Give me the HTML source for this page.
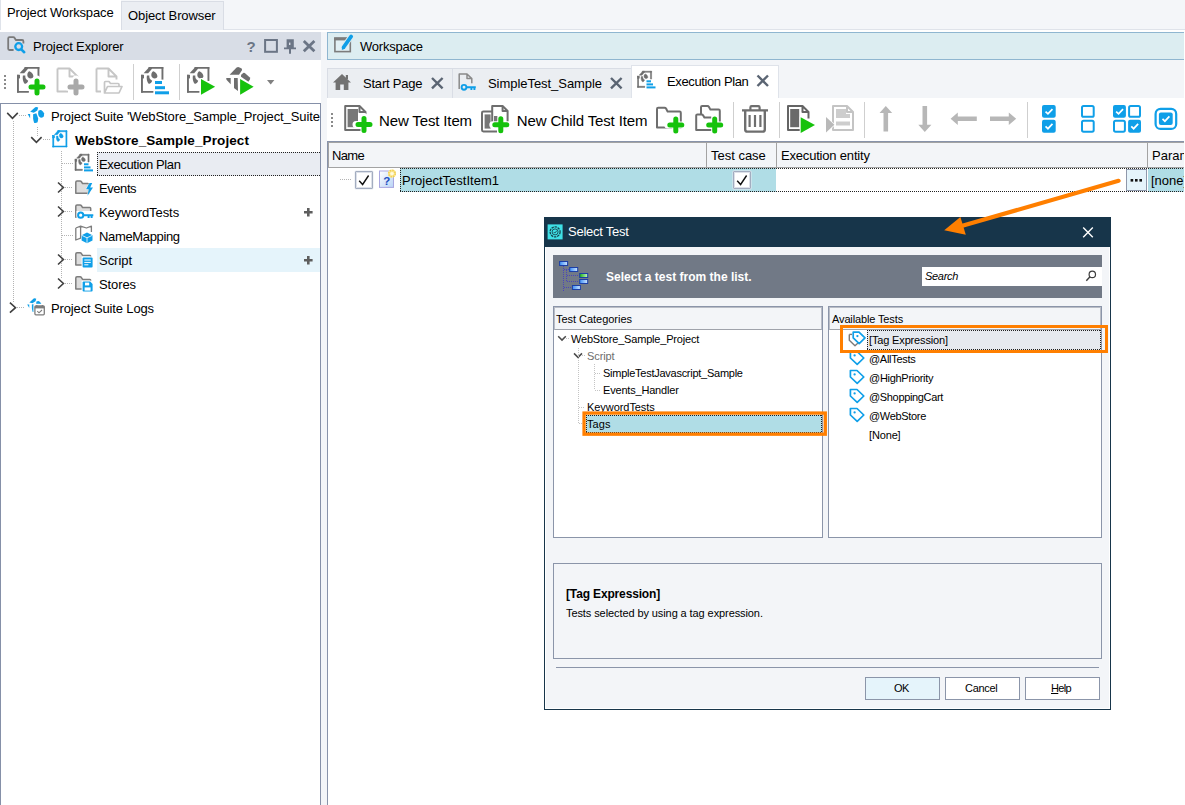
<!DOCTYPE html>
<html>
<head>
<meta charset="utf-8">
<title>Select Test</title>
<style>
*{box-sizing:border-box;margin:0;padding:0}
html,body{width:1185px;height:805px;overflow:hidden;background:#fff}
body{font-family:"Liberation Sans",sans-serif;font-size:13px;color:#000;position:relative}
.abs{position:absolute}
.t{position:absolute;white-space:nowrap;line-height:1}
svg{position:absolute;overflow:visible}
/* top band */
#topband{left:0;top:0;width:1185px;height:29px;background:#f4f6f9}
#topline{left:0;top:29px;width:1185px;height:1px;background:#dfe3ea}
#tab-pw{left:0;top:0;width:121px;height:30px;background:#fff;border-left:1px solid #dfe3ea}
#tab-ob{left:121px;top:1px;width:103px;height:29px;background:#ebeef3;border:1px solid #d9dde5;border-bottom:none}
/* left panel */
#pe-head{left:0;top:32px;width:321px;height:28px;background:#d8dde6}
#pe-tool{left:0;top:60px;width:321px;height:43px;background:#fff}
#tree{left:0;top:103px;width:321px;height:702px;background:#fff;border:1px solid #8590a8;border-bottom:none}
#split{left:321px;top:32px;width:6px;height:773px;background:#f3f5f8}
/* workspace */
#ws-head{left:327px;top:32px;width:870px;height:28px;background:#dcedf1;border:1px solid #8fb6d0}
#ws-tabs{left:327px;top:60px;width:858px;height:38px;background:#f3f5f8}
.itab{position:absolute;top:68px;height:30px;background:#ebeef2;border:1px solid #d9dde5;border-bottom:none}
#atab{left:631px;top:65px;width:148px;height:34px;background:#fff;border:1px solid #dfe3ea;border-bottom:none}
#ws-tool{left:327px;top:98px;width:858px;height:43px;background:#fff}
#grid{left:327px;top:141px;width:857px;height:664px;background:#fff;border-left:1px solid #8893aa;border-top:1px solid #8893aa}
#ghead{left:328px;top:142px;width:856px;height:26px;background:#f3f5f8;border:1px solid #a3a3a3;border-right:none}
.gsep{position:absolute;top:143px;width:1px;height:24px;background:#a3a3a3}
.sel{background:#b0dde6}
.dot-h{position:absolute;height:1px;background-image:repeating-linear-gradient(90deg,#222 0 1px,transparent 1px 2px)}
.dot-v{position:absolute;width:1px;background-image:repeating-linear-gradient(180deg,#222 0 1px,transparent 1px 2px)}
.tl-h{position:absolute;height:1px;background-image:repeating-linear-gradient(90deg,#b4b4b4 0 1px,transparent 1px 2px)}
.tl-v{position:absolute;width:1px;background-image:repeating-linear-gradient(180deg,#b4b4b4 0 1px,transparent 1px 2px)}
.cb{position:absolute;width:18px;height:18px;background:#fff;border:1px solid #a3adc0;border-radius:1px;box-shadow:inset 0 0 0 1px #dde1e9,0 0 0 0.5px #e6e9ef}
/* dialog */
#dlg{left:544px;top:217px;width:567px;height:493px;background:#f3f5f8;border:1px solid #17354a;box-shadow:inset 0 0 0 1px #fff}
#dlg-title{left:544px;top:217px;width:567px;height:30px;background:#17354a}
#banner{left:553px;top:255px;width:549px;height:43px;background:#717986}
#search{left:922px;top:267px;width:180px;height:19px;background:#fff}
.pnl{position:absolute;top:306px;height:232px;background:#fff;border:1px solid #8b95a9}
.pnl-h{position:absolute;top:307px;height:23px;background:#f3f5f8;border:1px solid #b9bdc6;border-bottom-color:#9fa3ab}
#desc{left:553px;top:563px;width:549px;height:96px;border:1px solid #8b95a9;background:#f3f5f8}
#dsep{left:556px;top:667px;width:543px;height:1px;background:#8b95a9}
.btn{position:absolute;top:677px;width:75px;height:23px;background:#fff;border:1px solid #8b95a9}
.d{font-size:11px}
.ob{position:absolute;border:3px solid #f5820b}
</style>
</head>
<body>
<!-- top band -->
<div class="abs" id="topband"></div>
<div class="abs" id="topline"></div>
<div class="abs" id="tab-pw"></div>
<div class="abs" id="tab-ob"></div>
<span class="t" id="tx-pw" style="left:7px;top:6px;letter-spacing:-0.14px">Project Workspace</span>
<span class="t" id="tx-ob" style="left:128px;top:9px;letter-spacing:-0.09px">Object Browser</span>

<!-- left panel -->
<div class="abs" id="pe-head"></div>
<span class="t" id="tx-pe" style="left:33px;top:40px;letter-spacing:-0.12px">Project Explorer</span>
<div class="abs" id="pe-tool"></div>
<div class="abs" id="tree"></div>

<!-- tree rows -->
<div class="abs" style="left:97px;top:152px;width:223px;height:24px;background:#e9ecf2"></div>
<div class="dot-h" style="left:97px;top:152px;width:223px"></div>
<div class="dot-h" style="left:97px;top:175px;width:223px"></div>
<div class="dot-v" style="left:97px;top:152px;height:24px"></div>
<div class="abs" style="left:97px;top:248px;width:223px;height:24px;background:#e5f4fb"></div>
<div class="tl-v" style="left:13px;top:121px;height:182px"></div>
<div class="tl-v" style="left:37px;top:127px;height:10px"></div>
<div class="tl-v" style="left:61px;top:151px;height:127px"></div>
<div class="tl-h" style="left:19px;top:115px;width:7px"></div>
<div class="tl-h" style="left:43px;top:139px;width:7px"></div>
<div class="tl-h" style="left:62px;top:163px;width:11px"></div>
<div class="tl-h" style="left:65px;top:187px;width:8px"></div>
<div class="tl-h" style="left:65px;top:211px;width:8px"></div>
<div class="tl-h" style="left:62px;top:235px;width:11px"></div>
<div class="tl-h" style="left:65px;top:259px;width:8px"></div>
<div class="tl-h" style="left:65px;top:283px;width:8px"></div>
<div class="tl-h" style="left:17px;top:307px;width:8px"></div>
<span class="t" id="tr1" style="left:51px;top:110px;letter-spacing:-0.1px">Project Suite 'WebStore_Sample_Project_Suite</span>
<span class="t" id="tr2" style="left:75px;top:134px;font-weight:bold;font-size:13.5px;letter-spacing:0.11px">WebStore_Sample_Project</span>
<span class="t" id="tr3" style="left:99px;top:158px;letter-spacing:-0.37px">Execution Plan</span>
<span class="t" id="tr4" style="left:99px;top:182px;letter-spacing:-0.43px">Events</span>
<span class="t" id="tr5" style="left:99px;top:206px;letter-spacing:-0.07px">KeywordTests</span>
<span class="t" id="tr6" style="left:99px;top:230px;letter-spacing:-0.35px">NameMapping</span>
<span class="t" id="tr7" style="left:99px;top:254px;letter-spacing:-0.04px">Script</span>
<span class="t" id="tr8" style="left:99px;top:278px;letter-spacing:-0.1px">Stores</span>
<span class="t" id="tr9" style="left:51px;top:302px;letter-spacing:-0.14px">Project Suite Logs</span>
<div class="abs" id="split"></div>

<!-- workspace -->
<div class="abs" id="ws-head"></div>
<span class="t" id="tx-ws" style="left:360px;top:40px;letter-spacing:-0.23px">Workspace</span>
<div class="abs" id="ws-tabs"></div>
<div class="itab" style="left:327px;width:126px"></div>
<div class="itab" style="left:452px;width:180px"></div>
<div class="abs" id="atab"></div>
<span class="t" id="tx-sp" style="left:363px;top:77px;letter-spacing:-0.21px">Start Page</span>
<span class="t" id="tx-st" style="left:488px;top:77px;letter-spacing:-0.05px">SimpleTest_Sample</span>
<span class="t" id="tx-ep" style="left:667px;top:75px;letter-spacing:-0.38px">Execution Plan</span>
<div class="abs" id="ws-tool"></div>
<span class="t" id="tx-nti" style="left:379px;top:113px;font-size:15px;letter-spacing:-0.14px">New Test Item</span>
<span class="t" id="tx-ncti" style="left:516.8px;top:113px;font-size:15px;letter-spacing:-0.14px">New Child Test Item</span>
<div class="abs" id="grid"></div>
<div class="abs" id="ghead"></div>
<div class="gsep" style="left:706px"></div>
<div class="gsep" style="left:776px"></div>
<div class="gsep" style="left:1147px"></div>
<span class="t" id="tx-name" style="left:332px;top:149px;letter-spacing:-0.67px">Name</span>
<span class="t" id="tx-tc" style="left:711px;top:149px;letter-spacing:-0.01px">Test case</span>
<span class="t" id="tx-ee" style="left:781px;top:149px;letter-spacing:-0.19px">Execution entity</span>
<span class="t" id="tx-par" style="left:1152px;top:149px">Param</span>


<!-- grid row -->
<div class="abs sel" style="left:400px;top:168px;width:376px;height:24px"></div>
<div class="abs sel" style="left:1148px;top:168px;width:36px;height:24px"></div>
<div class="dot-h" style="left:400px;top:168px;width:784px"></div>
<div class="dot-h" style="left:400px;top:191px;width:784px"></div>
<div class="dot-v" style="left:400px;top:168px;height:24px"></div>
<div class="tl-h" style="left:340px;top:179px;width:11px"></div>
<div class="cb" style="left:355px;top:171px"></div>
<div class="cb" style="left:733px;top:171px"></div>
<div class="abs" style="left:1126px;top:169px;width:21px;height:22px;background:#e5f4fb;border:1px solid #8f98ab"></div>
<span class="t" id="tx-pti" style="left:402px;top:174px;letter-spacing:0.01px">ProjectTestItem1</span>
<span class="t" id="tx-none" style="left:1151px;top:174px">[none]</span>
<!-- dialog -->
<div class="abs" id="dlg"></div>
<div class="abs" id="dlg-title"></div>
<span class="t" id="tx-dt" style="left:568px;top:225px;color:#fff;letter-spacing:-0.24px">Select Test</span>
<div class="abs" id="banner"></div>
<span class="t d" id="tx-bn" style="left:606px;top:271px;color:#fff;font-weight:bold;font-size:12px;letter-spacing:0.01px">Select a test from the list.</span>
<div class="abs" id="search"></div>
<span class="t d" id="tx-se" style="left:925px;top:271px;font-style:italic;letter-spacing:-0.31px">Search</span>
<div class="pnl" style="left:553px;width:270px"></div>
<div class="pnl" style="left:828px;width:274px"></div>
<div class="pnl-h" style="left:554px;width:268px"></div>
<div class="pnl-h" style="left:829px;width:272px"></div>
<span class="t d" id="tx-tcat" style="left:556px;top:314px;letter-spacing:-0.03px">Test Categories</span>
<span class="t d" id="tx-avt" style="left:832px;top:314px;letter-spacing:-0.13px">Available Tests</span>

<!-- dialog lists -->
<div class="abs sel" style="left:586px;top:415px;width:236px;height:18px"></div>
<div class="dot-h" style="left:586px;top:415px;width:236px"></div>
<div class="dot-h" style="left:586px;top:432px;width:236px"></div>
<div class="dot-v" style="left:586px;top:415px;height:18px"></div>
<div class="dot-v" style="left:821px;top:415px;height:18px"></div>
<div class="abs" style="left:867px;top:330px;width:234px;height:20px;background:#e6e9ef"></div>
<div class="dot-h" style="left:867px;top:330px;width:234px"></div>
<div class="dot-h" style="left:867px;top:349px;width:234px"></div>
<div class="dot-v" style="left:867px;top:330px;height:20px"></div>
<div class="dot-v" style="left:1100px;top:330px;height:20px"></div>
<span class="t d" id="dl1" style="left:571px;top:334px;letter-spacing:-0.19px">WebStore_Sample_Project</span>
<span class="t d" id="dl2" style="left:587px;top:351px;color:#6d6d6d;letter-spacing:-0.1px">Script</span>
<span class="t d" id="dl3" style="left:603px;top:368px;letter-spacing:-0.26px">SimpleTestJavascript_Sample</span>
<span class="t d" id="dl4" style="left:603px;top:385px;letter-spacing:-0.19px">Events_Handler</span>
<span class="t d" id="dl5" style="left:587px;top:402px;letter-spacing:-0.06px">KeywordTests</span>
<span class="t d" id="dl6" style="left:587px;top:419px;letter-spacing:0.09px">Tags</span>
<span class="t d" id="dr1" style="left:869px;top:335px;letter-spacing:-0.15px">[Tag Expression]</span>
<span class="t d" id="dr2" style="left:869px;top:354px;letter-spacing:-0.3px">@AllTests</span>
<span class="t d" id="dr3" style="left:869px;top:373px;letter-spacing:-0.29px">@HighPriority</span>
<span class="t d" id="dr4" style="left:869px;top:392px;letter-spacing:-0.34px">@ShoppingCart</span>
<span class="t d" id="dr5" style="left:869px;top:411px;letter-spacing:-0.32px">@WebStore</span>
<span class="t d" id="dr6" style="left:869px;top:430px;letter-spacing:-0.15px">[None]</span>
<div class="abs" id="desc"></div>
<span class="t d" id="tx-d1" style="left:566px;top:588px;font-weight:bold;font-size:12px;letter-spacing:-0.15px">[Tag Expression]</span>
<span class="t d" id="tx-d2" style="left:566px;top:608px;letter-spacing:-0.09px">Tests selected by using a tag expression.</span>
<div class="abs" id="dsep"></div>
<div class="btn" style="left:865px;background:#e5f4fb"></div>
<div class="btn" style="left:945px"></div>
<div class="btn" style="left:1025px"></div>
<span class="t d" id="tx-ok" style="left:894px;top:683px;letter-spacing:-0.55px">OK</span>
<span class="t d" id="tx-ca" style="left:965px;top:683px;letter-spacing:-0.31px">Cancel</span>
<span class="t d" id="tx-he" style="left:1051px;top:683px;letter-spacing:-0.66px"><u>H</u>elp</span>
<div class="abs" id="edgecol" style="left:1184px;top:30px;width:1px;height:775px;background:#fff"></div>
<!--ICONS-START-->
<svg id="ov" width="1185" height="805" viewBox="0 0 1185 805" style="left:0;top:0;pointer-events:none">
<rect x="4" y="75" width="2" height="2" fill="#8a8a8a"/>
<rect x="4" y="79" width="2" height="2" fill="#8a8a8a"/>
<rect x="4" y="83" width="2" height="2" fill="#8a8a8a"/>
<rect x="4" y="87" width="2" height="2" fill="#8a8a8a"/>
<g transform="translate(17,67) scale(1)" ><rect x="0" y="7.8" width="1.9" height="17.9" fill="#6e6e6e"/><rect x="0" y="7.8" width="3" height="3.6" fill="#6e6e6e"/><rect x="0" y="23.9" width="12" height="1.8" rx="0.6" fill="#6e6e6e"/><rect x="7.4" y="0" width="15" height="1.8" rx="0.6" fill="#6e6e6e"/><rect x="20.5" y="0" width="1.9" height="11" rx="0.6" fill="#6e6e6e"/><path d="M2.6,6.3 L8.3,0 L11,0 L11,1.8 L7.2,6.3 Z" fill="#6e6e6e"/><path d="M12.2,4.3 C14.2,4.6 16.6,7.6 16.4,9.6 C16,11.6 13.2,12.2 11.3,10.6 C9.6,8.8 10.2,5.4 12.2,4.3 Z" fill="#6e6e6e"/><path d="M5.9,8.6 L8.3,8.6 C8,11.2 9.2,12.6 11.2,13.8 C10.6,15.6 9.4,16.8 7.9,16.9 C5.8,15.2 5.4,11.4 5.9,8.6 Z" fill="#6e6e6e"/></g>
<path d="M29,87 H45 M37,79 V95" stroke="#fff" stroke-width="7" stroke-linecap="round" fill="none"/><path d="M31.0,87 H43.0 M37,81.0 V93.0" stroke="#16c20c" stroke-width="5" stroke-linecap="round" fill="none"/>
<path d="M57.5,68.5 H69.5 L77.5,76.5 V79 M68,91.5 H57.5 V68.5 M69.5,68.5 V76.5 H77.5" stroke="#c6c6c6" stroke-width="1.9" fill="none" stroke-linejoin="round"/>
<path d="M68,87 H84 M76,79 V95" stroke="#fff" stroke-width="7" stroke-linecap="round" fill="none"/><path d="M70.0,87 H82.0 M76,81.0 V93.0" stroke="#a9a9a9" stroke-width="5" stroke-linecap="round" fill="none"/>
<path d="M96.5,68.5 H108.5 L116.5,76.5 V79.5 M101,91.5 H96.5 V68.5 M108.5,68.5 V76.5 H116.5" stroke="#c6c6c6" stroke-width="1.9" fill="none" stroke-linejoin="round"/>
<path d="M104.5,93 V82.5 Q104.5,81.5 105.5,81.5 H109 L110.5,83.5 H118 Q119,83.5 119,84.5 V86.5 M104.5,93 L107.5,86.5 H122 L119,93 Z" stroke="#c6c6c6" stroke-width="1.7" fill="#fff" stroke-linejoin="round"/>
<rect x="133" y="64" width="1" height="36" fill="#cfcfcf"/>
<rect x="179" y="64" width="1" height="36" fill="#cfcfcf"/>
<g transform="translate(141,67) scale(1)" ><rect x="0" y="7.8" width="1.9" height="17.9" fill="#6e6e6e"/><rect x="0" y="7.8" width="3" height="3.6" fill="#6e6e6e"/><rect x="0" y="23.9" width="12.5" height="1.8" rx="0.6" fill="#6e6e6e"/><rect x="7.4" y="0" width="15" height="1.8" rx="0.6" fill="#6e6e6e"/><rect x="20.5" y="0" width="1.9" height="13.5" rx="0.6" fill="#6e6e6e"/><path d="M2.6,6.3 L8.3,0 L11,0 L11,1.8 L7.2,6.3 Z" fill="#6e6e6e"/><path d="M12.2,4.3 C14.2,4.6 16.6,7.6 16.4,9.6 C16,11.6 13.2,12.2 11.3,10.6 C9.6,8.8 10.2,5.4 12.2,4.3 Z" fill="#6e6e6e"/><path d="M5.9,8.6 L8.3,8.6 C8,11.2 9.2,12.6 11.2,13.8 C10.6,15.6 9.4,16.8 7.9,16.9 C5.8,15.2 5.4,11.4 5.9,8.6 Z" fill="#6e6e6e"/></g>
<rect x="154" y="79.6" width="13" height="15" fill="#fff"/>
<rect x="155" y="81" width="7" height="3" fill="#0f9fe8"/><rect x="155" y="86.2" width="10" height="3" fill="#0f9fe8"/><rect x="155" y="91.3" width="14" height="3" fill="#0f9fe8"/>
<g transform="translate(187,67) scale(1)" ><rect x="0" y="7.8" width="1.9" height="17.9" fill="#6e6e6e"/><rect x="0" y="7.8" width="3" height="3.6" fill="#6e6e6e"/><rect x="0" y="23.9" width="12.5" height="1.8" rx="0.6" fill="#6e6e6e"/><rect x="7.4" y="0" width="15" height="1.8" rx="0.6" fill="#6e6e6e"/><rect x="20.5" y="0" width="1.9" height="14" rx="0.6" fill="#6e6e6e"/><path d="M2.6,6.3 L8.3,0 L11,0 L11,1.8 L7.2,6.3 Z" fill="#6e6e6e"/><path d="M12.2,4.3 C14.2,4.6 16.6,7.6 16.4,9.6 C16,11.6 13.2,12.2 11.3,10.6 C9.6,8.8 10.2,5.4 12.2,4.3 Z" fill="#6e6e6e"/><path d="M5.9,8.6 L8.3,8.6 C8,11.2 9.2,12.6 11.2,13.8 C10.6,15.6 9.4,16.8 7.9,16.9 C5.8,15.2 5.4,11.4 5.9,8.6 Z" fill="#6e6e6e"/></g>
<path d="M201,78.9 L215.1,86.80000000000001 L201,94.7 Z" fill="#fff" stroke="#fff" stroke-width="2" stroke-linejoin="round"/>
<path d="M201,78.9 L215.1,86.80000000000001 L201,94.7 Z" fill="#16c20c"/>
<g transform="translate(226,67) scale(1)" ><path d="M3.6,7.8 L10.6,0.6 Q12,-0.4 13.6,0.4 L15.6,1.6 Q16.4,2.4 15.8,3.4 L13,7.8 Z" fill="#6e6e6e"/><path d="M0.3,10.9 L4.7,10.9 L4.7,17.2 L0.7,13.1 Q0,12 0.3,10.9 Z" fill="#6e6e6e"/><path d="M8,10.9 L11.7,10.9 L12,24 L8.6,21.6 Q8,21.2 8,20.4 Z" fill="#6e6e6e"/><path d="M17.2,5.9 Q18,5.5 18.8,6.1 L23.6,10.3 Q24.6,11.3 23.9,12.5 L22.4,14.7 L15,9.7 Q14.8,8.6 15.5,7.6 Z" fill="#6e6e6e"/></g>
<path d="M240.1,78.9 L253.6,86.80000000000001 L240.1,94.7 Z" fill="#fff" stroke="#fff" stroke-width="2" stroke-linejoin="round"/>
<path d="M240.1,78.9 L253.6,86.80000000000001 L240.1,94.7 Z" fill="#16c20c"/>
<path d="M267,80 H274.4 L270.7,84.4 Z" fill="#808080"/>
<path d="M7.2,112.9 L12.5,118.3 L17.8,112.9" stroke="#404040" stroke-width="1.6" fill="none"/>
<path d="M31.2,137.1 L36.4,142.4 L41.6,137.1" stroke="#404040" stroke-width="1.6" fill="none"/>
<path d="M58,182.5 L63.4,187.5 L58,192.5" stroke="#404040" stroke-width="1.6" fill="none"/>
<path d="M58,206.5 L63.4,211.5 L58,216.5" stroke="#404040" stroke-width="1.6" fill="none"/>
<path d="M58,254.5 L63.4,259.5 L58,264.5" stroke="#404040" stroke-width="1.6" fill="none"/>
<path d="M58,278.5 L63.4,283.5 L58,288.5" stroke="#404040" stroke-width="1.6" fill="none"/>
<path d="M9.9,302.7 L15.5,307.7 L9.9,312.7" stroke="#404040" stroke-width="1.6" fill="none"/>
<g transform="translate(27.8,107) scale(1)" ><path d="M2.4,4.8 L7.4,0.2 Q8.8,-0.5 10.4,0.4 L9.5,3.4 L6,5.7 Z" fill="#0f9fe8"/><path d="M-0.1,7 H2.3 V11.2 Z" fill="#0f9fe8"/><path d="M5.3,7.2 L8.5,6.2 Q9.7,9 10.3,11.3 Q10.4,13.6 9.8,15.2 Q8,16.3 6.3,15.7 Q5.4,13 5.3,11.3 Z" fill="#0f9fe8"/><path d="M10.6,3.7 Q12.4,2.7 13.7,3.2 Q15.7,4.6 16.2,6.3 Q16.5,8.4 15.8,9.8 Q14.2,10.9 12.6,10.6 Q11,9.5 10.5,8 Q10.1,6 10.6,3.7 Z" fill="#0f9fe8"/></g>
<g transform="translate(52.7,130.6) scale(0.64)" stroke="#0f9fe8" stroke-width="0.7"><rect x="0" y="7.8" width="1.9" height="17.9" fill="#0f9fe8"/><rect x="0" y="7.8" width="3" height="3.6" fill="#0f9fe8"/><rect x="0" y="23.9" width="22.4" height="1.8" rx="0.6" fill="#0f9fe8"/><rect x="7.4" y="0" width="15" height="1.8" rx="0.6" fill="#0f9fe8"/><rect x="20.5" y="0" width="1.9" height="25.7" rx="0.6" fill="#0f9fe8"/><path d="M2.6,6.3 L8.3,0 L11,0 L11,1.8 L7.2,6.3 Z" fill="#0f9fe8"/><path d="M12.2,4.3 C14.2,4.6 16.6,7.6 16.4,9.6 C16,11.6 13.2,12.2 11.3,10.6 C9.6,8.8 10.2,5.4 12.2,4.3 Z" fill="#0f9fe8"/><path d="M5.9,8.6 L8.3,8.6 C8,11.2 9.2,12.6 11.2,13.8 C10.6,15.6 9.4,16.8 7.9,16.9 C5.8,15.2 5.4,11.4 5.9,8.6 Z" fill="#0f9fe8"/></g>
<g transform="translate(75,154.2) scale(0.63)" stroke="#6e6e6e" stroke-width="0.7"><rect x="0" y="7.8" width="1.9" height="17.9" fill="#6e6e6e"/><rect x="0" y="7.8" width="3" height="3.6" fill="#6e6e6e"/><rect x="0" y="23.9" width="12" height="1.8" rx="0.6" fill="#6e6e6e"/><rect x="7.4" y="0" width="15" height="1.8" rx="0.6" fill="#6e6e6e"/><rect x="20.5" y="0" width="1.9" height="13" rx="0.6" fill="#6e6e6e"/><path d="M2.6,6.3 L8.3,0 L11,0 L11,1.8 L7.2,6.3 Z" fill="#6e6e6e"/><path d="M12.2,4.3 C14.2,4.6 16.6,7.6 16.4,9.6 C16,11.6 13.2,12.2 11.3,10.6 C9.6,8.8 10.2,5.4 12.2,4.3 Z" fill="#6e6e6e"/><path d="M5.9,8.6 L8.3,8.6 C8,11.2 9.2,12.6 11.2,13.8 C10.6,15.6 9.4,16.8 7.9,16.9 C5.8,15.2 5.4,11.4 5.9,8.6 Z" fill="#6e6e6e"/></g>
<rect x="83" y="162.4" width="8" height="9" fill="#fff"/>
<rect x="84" y="163.3" width="4.5" height="2" fill="#0f9fe8"/><rect x="84" y="166.4" width="6.5" height="2" fill="#0f9fe8"/><rect x="84" y="169.4" width="9" height="2" fill="#0f9fe8"/>
<path d="M75.8,193.2 V182.2 Q75.8,181.0 77,181.0 H80 Q81,181.0 81.6,182.0 L82.6,183.6 H87.9 Q88.7,183.6 88.7,184.6 V193.2 Z" fill="#dddddd" stroke="#7d7d7d" stroke-width="1.5" stroke-linejoin="round"/>
<path d="M89.5,183 L86,189.3 H88.8 L87.5,195.8 L93,187.6 H90.2 L92.2,183 Z" fill="#0f9fe8" stroke="#fff" stroke-width="0.8" paint-order="stroke"/>
<path d="M75.8,217.2 V206.2 Q75.8,205.0 77,205.0 H80 Q81,205.0 81.6,206.0 L82.6,207.6 H89.9 Q90.7,207.6 90.7,208.6 V217.2 Z" fill="#dddddd" stroke="#7d7d7d" stroke-width="1.5" stroke-linejoin="round"/>
<rect x="76.5" y="211" width="17.5" height="9" fill="#fff"/>
<circle cx="80.7" cy="215.2" r="2.6" fill="none" stroke="#0f9fe8" stroke-width="2"/><path d="M83.5,215.2 H93.3 M88.6,215.2 V218 M91.6,215.2 V218" stroke="#0f9fe8" stroke-width="2" fill="none"/>
<path d="M75.8,228 L80.6,226.2 L86.4,228 L91.4,226.2 V232 M75.8,228 V240 L80.6,238.2 V226.2" fill="#fff" stroke="#7d7d7d" stroke-width="1.3" stroke-linejoin="round"/>
<path d="M81.6,235.2 L87,232.5 L92.5,235.2 V240.4 L87,243.2 L81.6,240.4 Z" fill="#0f9fe8" stroke="#fff" stroke-width="0.8" paint-order="stroke"/><path d="M81.9,235.4 L87,237.8 L92.2,235.4 M87,237.8 V243" stroke="#fff" stroke-width="0.8" fill="none"/>
<path d="M75.8,265.0 V254 Q75.8,252.8 77,252.8 H80 Q81,252.8 81.6,253.8 L82.6,255.4 H89.9 Q90.7,255.4 90.7,256.4 V265.0 Z" fill="#dddddd" stroke="#7d7d7d" stroke-width="1.5" stroke-linejoin="round"/>
<rect x="81.6" y="256.4" width="11.8" height="11.8" fill="#fff"/>
<rect x="82.6" y="257.4" width="10" height="10" rx="1" fill="#0f9fe8"/><path d="M84.3,260 H90.8 M84.3,262.4 H90.8 M84.3,264.8 H88.4" stroke="#fff" stroke-width="1" fill="none"/>
<path d="M75.8,289.0 V278 Q75.8,276.8 77,276.8 H80 Q81,276.8 81.6,277.8 L82.6,279.4 H89.9 Q90.7,279.4 90.7,280.4 V289.0 Z" fill="#dddddd" stroke="#7d7d7d" stroke-width="1.5" stroke-linejoin="round"/>
<rect x="81.6" y="280.6" width="11.8" height="11.8" fill="#fff"/>
<path d="M82.6,282.6 Q82.6,281.6 83.6,281.6 H90.2 L92.6,284 V290.6 Q92.6,291.6 91.6,291.6 H83.6 Q82.6,291.6 82.6,290.6 Z" fill="#0f9fe8"/><rect x="85" y="282.6" width="4.2" height="2.8" fill="#fff"/><rect x="84.6" y="287.4" width="6" height="3.2" fill="#fff"/>
<g transform="translate(27.3,298.4) scale(0.86)" ><path d="M2.4,4.8 L7.4,0.2 Q8.8,-0.5 10.4,0.4 L9.5,3.4 L6,5.7 Z" fill="#0f9fe8"/><path d="M-0.1,7 H2.3 V11.2 Z" fill="#0f9fe8"/><path d="M5.3,7.2 L8.5,6.2 Q9.7,9 10.3,11.3 Q10.4,13.6 9.8,15.2 Q8,16.3 6.3,15.7 Q5.4,13 5.3,11.3 Z" fill="#0f9fe8"/><path d="M10.6,3.7 Q12.4,2.7 13.7,3.2 Q15.7,4.6 16.2,6.3 Q16.5,8.4 15.8,9.8 Q14.2,10.9 12.6,10.6 Q11,9.5 10.5,8 Q10.1,6 10.6,3.7 Z" fill="#0f9fe8"/></g>
<rect x="33.4" y="303.8" width="12.2" height="12.2" fill="#fff"/>
<rect x="34.9" y="306" width="9.4" height="8.8" rx="1" fill="#fff" stroke="#7d7d7d" stroke-width="1.3"/><rect x="34.9" y="306" width="9.4" height="2.4" fill="#7d7d7d"/><path d="M36.8,305 V306.5 M42.4,305 V306.5" stroke="#7d7d7d" stroke-width="1.3"/><path d="M37.3,311.2 L39,312.8 L42,310" stroke="#7d7d7d" stroke-width="1.1" fill="none"/>
<path d="M304,212.3 H312.6 M308.3,208.0 V216.60000000000002" stroke="#5e5e5e" stroke-width="2.6" fill="none"/>
<path d="M304,260.3 H312.6 M308.3,256.0 V264.6" stroke="#5e5e5e" stroke-width="2.6" fill="none"/>
<rect x="334.9" y="38.2" width="15.4" height="13.4" fill="#e2f0f4" stroke="#7c7c7c" stroke-width="1.6"/><rect x="334.1" y="37.4" width="17" height="3" fill="#7c7c7c"/>
<path d="M351.3,36.2 L343,48" stroke="#dcedf1" stroke-width="5.6" fill="none"/>
<path d="M351.2,36.4 L343.6,47.2" stroke="#0f9fe8" stroke-width="3.7" stroke-linecap="round" fill="none"/><path d="M342,46.2 L345.2,48.4 L341.8,50 Z" fill="#0f9fe8"/>
<path d="M333,82.4 L342,74 L351,82.4 H348.4 V90 H343.8 V84.6 H340.2 V90 H335.6 V82.4 Z" fill="#727272"/><rect x="345.8" y="75" width="2.2" height="4" fill="#727272"/>
<path d="M432,78 L442.6,88.4 M442.6,78 L432,88.4" stroke="#5b6573" stroke-width="2.4" fill="none"/>
<path d="M611,78 L621.6,88.4 M621.6,78 L611,88.4" stroke="#5b6573" stroke-width="2.4" fill="none"/>
<path d="M757.5,75.5 L768,86 M768,75.5 L757.5,86" stroke="#5b6573" stroke-width="2.4" fill="none"/>
<path d="M459.2,89 V74 H467 L471.8,78.6 V83.5 M467,74 V78.6 H471.8" stroke="#8a8a8a" stroke-width="1.5" fill="none" stroke-linejoin="round"/>
<rect x="460.5" y="83.6" width="16" height="7.4" fill="#ebeef2"/>
<circle cx="464" cy="87.3" r="2.4" fill="none" stroke="#0f9fe8" stroke-width="1.9"/><path d="M466.6,87.3 H475.8 M471.4,87.3 V90 M474.4,87.3 V90" stroke="#0f9fe8" stroke-width="1.9" fill="none"/>
<g transform="translate(637.5,71.2) scale(0.63)" stroke="#6e6e6e" stroke-width="0.7"><rect x="0" y="7.8" width="1.9" height="17.9" fill="#6e6e6e"/><rect x="0" y="7.8" width="3" height="3.6" fill="#6e6e6e"/><rect x="0" y="23.9" width="12" height="1.8" rx="0.6" fill="#6e6e6e"/><rect x="7.4" y="0" width="15" height="1.8" rx="0.6" fill="#6e6e6e"/><rect x="20.5" y="0" width="1.9" height="13" rx="0.6" fill="#6e6e6e"/><path d="M2.6,6.3 L8.3,0 L11,0 L11,1.8 L7.2,6.3 Z" fill="#6e6e6e"/><path d="M12.2,4.3 C14.2,4.6 16.6,7.6 16.4,9.6 C16,11.6 13.2,12.2 11.3,10.6 C9.6,8.8 10.2,5.4 12.2,4.3 Z" fill="#6e6e6e"/><path d="M5.9,8.6 L8.3,8.6 C8,11.2 9.2,12.6 11.2,13.8 C10.6,15.6 9.4,16.8 7.9,16.9 C5.8,15.2 5.4,11.4 5.9,8.6 Z" fill="#6e6e6e"/></g>
<rect x="645.5" y="79.4" width="8" height="9" fill="#fff"/>
<rect x="646.5" y="80.3" width="4.5" height="2" fill="#0f9fe8"/><rect x="646.5" y="83.4" width="6.5" height="2" fill="#0f9fe8"/><rect x="646.5" y="86.4" width="9" height="2" fill="#0f9fe8"/>
<rect x="331" y="113" width="2" height="2" fill="#8a8a8a"/>
<rect x="331" y="117" width="2" height="2" fill="#8a8a8a"/>
<rect x="331" y="121" width="2" height="2" fill="#8a8a8a"/>
<rect x="331" y="125" width="2" height="2" fill="#8a8a8a"/>
<path d="M345.2,106 H359.5 L365.5,112 V130 H345.2 Z" fill="#fff" stroke="#6e6e6e" stroke-width="2" stroke-linejoin="round"/><path d="M359.5,106 V112 H365.5" fill="none" stroke="#6e6e6e" stroke-width="2" stroke-linejoin="round"/>
<rect x="347.6" y="109" width="10.4" height="18.2" fill="#777"/>
<path d="M356,124.6 H372 M364,116.6 V132.6" stroke="#fff" stroke-width="7" stroke-linecap="round" fill="none"/><path d="M358.0,124.6 H370.0 M364,118.6 V130.6" stroke="#16c20c" stroke-width="5" stroke-linecap="round" fill="none"/>
<path d="M492,111.4 H483.4 Q482,111.4 482,112.8 V130 Q482,131.4 483.4,131.4 H497" fill="none" stroke="#6e6e6e" stroke-width="2"/>
<rect x="484.6" y="114.4" width="6" height="14.2" fill="#777"/>
<path d="M492.2,106 H502.59999999999997 L507.59999999999997,111 V126.5 H492.2 Z" fill="#fff" stroke="#6e6e6e" stroke-width="2" stroke-linejoin="round"/><path d="M502.59999999999997,106 V111 H507.59999999999997" fill="none" stroke="#6e6e6e" stroke-width="2" stroke-linejoin="round"/>
<rect x="494" y="116" width="4" height="8" fill="#777"/>
<path d="M492.8,124.8 H508.8 M500.8,116.8 V132.8" stroke="#fff" stroke-width="7" stroke-linecap="round" fill="none"/><path d="M494.8,124.8 H506.8 M500.8,118.8 V130.8" stroke="#16c20c" stroke-width="5" stroke-linecap="round" fill="none"/>
<path d="M657,127.6 V109 Q657,107.8 658.2,107.8 H664.6 Q665.6,107.8 666.2,108.8 L667.6,111.6 H679.6 Q680.8,111.6 680.8,112.8 V127.6 Z" fill="#fff" stroke="#6e6e6e" stroke-width="2" stroke-linejoin="round"/>
<path d="M667.8,124.9 H683.8 M675.8,116.9 V132.9" stroke="#fff" stroke-width="7" stroke-linecap="round" fill="none"/><path d="M669.8,124.9 H681.8 M675.8,118.9 V130.9" stroke="#16c20c" stroke-width="5" stroke-linecap="round" fill="none"/>
<path d="M701,114 V107.2 Q701,106 702.2,106 H707.4 Q708.4,106 709,107 L710.4,109.6 H718.6 Q719.8,109.6 719.8,110.8 V126" fill="none" stroke="#6e6e6e" stroke-width="2" stroke-linejoin="round"/>
<path d="M696.2,130 V115.6 Q696.2,114.4 697.4,114.4 H701.6 Q702.6,114.4 703.2,115.4 L704.4,117.6 H714.6 Q715.8,117.6 715.8,118.8 V130 Z" fill="#fff" stroke="#6e6e6e" stroke-width="2" stroke-linejoin="round"/>
<path d="M706.7,124.9 H722.7 M714.7,116.9 V132.9" stroke="#fff" stroke-width="7" stroke-linecap="round" fill="none"/><path d="M708.7,124.9 H720.7 M714.7,118.9 V130.9" stroke="#16c20c" stroke-width="5" stroke-linecap="round" fill="none"/>
<rect x="733" y="102" width="1" height="36" fill="#cfcfcf"/>
<rect x="779" y="102" width="1" height="36" fill="#cfcfcf"/>
<rect x="864" y="102" width="1" height="36" fill="#cfcfcf"/>
<rect x="1027" y="102" width="1" height="36" fill="#cfcfcf"/>
<path d="M742,110.4 H768 M750.4,110 V107.4 Q750.4,106.2 751.6,106.2 H758.4 Q759.6,106.2 759.6,107.4 V110" fill="none" stroke="#6e6e6e" stroke-width="2.2"/>
<path d="M745.2,110.4 V129.4 Q745.2,131.6 747.4,131.6 H762.6 Q764.8,131.6 764.8,129.4 V110.4" fill="none" stroke="#6e6e6e" stroke-width="2.4"/>
<path d="M749.6,115 V127 M755,115 V127 M760.4,115 V127" stroke="#6e6e6e" stroke-width="2.2" fill="none"/>
<path d="M800.5,130 H788 V106 H802.5 L808.5,112 V118.5 M802.5,106 V112 H808.5" fill="none" stroke="#646464" stroke-width="2" stroke-linejoin="round"/>
<rect x="790.2" y="109" width="9" height="18.2" fill="#6a6a6a"/>
<path d="M800.7,117.2 L815,125.05000000000001 L800.7,132.9 Z" fill="#fff" stroke="#fff" stroke-width="2" stroke-linejoin="round"/>
<path d="M800.7,117.2 L815,125.05000000000001 L800.7,132.9 Z" fill="#16c20c"/>
<path d="M833,106 H847 L853,112 V130 H833 Z" fill="#fff" stroke="#c4c4c4" stroke-width="2" stroke-linejoin="round"/><path d="M847,106 V112 H853" fill="none" stroke="#c4c4c4" stroke-width="2" stroke-linejoin="round"/>
<path d="M836,109 H846 V114 H850 V118 H836 Z M836,121.5 H850 V125.5 H836 Z" fill="#cdcdcd"/>
<path d="M826,117 L834.4,124.8 L826,132.6 Z" fill="#b9b9b9" stroke="#fff" stroke-width="1.4" paint-order="stroke"/>
<path d="M885.8,106 L892.2,113 H888.1 V131.6 H883.5 V113 H879.5 Z" fill="#b7b7b7"/>
<path d="M924.8,132 L931.4,124.8 H927.1 V106 H922.5 V124.8 H918.3 Z" fill="#b7b7b7"/>
<path d="M950.6,118.8 L957.8,112.6 V116.5 H976.8 V121.1 H957.8 V125 Z" fill="#b7b7b7"/>
<path d="M1016.2,118.8 L1008.8,112.6 V116.5 H990 V121.1 H1008.8 V125 Z" fill="#b7b7b7"/>
<rect x="1042" y="105" width="13.7" height="12.8" rx="2" fill="#0f9fe8"/>
<path d="M1045.55,111.60000000000001 L1047.9499999999998,113.9 L1052.4499999999998,109.10000000000001" stroke="#fff" stroke-width="1.7" fill="none"/>
<rect x="1042" y="119.7" width="13.7" height="13" rx="2" fill="#0f9fe8"/>
<path d="M1045.55,126.4 L1047.9499999999998,128.7 L1052.4499999999998,123.9" stroke="#fff" stroke-width="1.7" fill="none"/>
<rect x="1082" y="106" width="11.7" height="10.8" rx="1.6" fill="#fff" stroke="#0f9fe8" stroke-width="2"/>
<rect x="1082" y="120.7" width="11.7" height="11" rx="1.6" fill="#fff" stroke="#0f9fe8" stroke-width="2"/>
<rect x="1113" y="105" width="12.9" height="12.8" rx="2" fill="#0f9fe8"/>
<path d="M1116.15,111.60000000000001 L1118.55,113.9 L1123.05,109.10000000000001" stroke="#fff" stroke-width="1.7" fill="none"/>
<rect x="1129.1" y="106" width="10.9" height="10.8" rx="1.6" fill="#fff" stroke="#0f9fe8" stroke-width="2"/>
<rect x="1114" y="120.7" width="10.9" height="11" rx="1.6" fill="#fff" stroke="#0f9fe8" stroke-width="2"/>
<rect x="1128.1" y="119.7" width="12.9" height="13" rx="2" fill="#0f9fe8"/>
<path d="M1131.25,126.4 L1133.6499999999999,128.7 L1138.1499999999999,123.9" stroke="#fff" stroke-width="1.7" fill="none"/>
<rect x="1155.6" y="108.9" width="20.6" height="20" rx="5" fill="#fff" stroke="#0f9fe8" stroke-width="2.2"/>
<rect x="1158.9" y="112.5" width="13.8" height="12.4" rx="2" fill="#0f9fe8"/>
<path d="M1162.5000000000002,118.9 L1164.9,121.2 L1169.4,116.4" stroke="#fff" stroke-width="1.7" fill="none"/>
<path d="M359.2,180.70000000000002 L362.59999999999997,184.5 L368.59999999999997,175.5" stroke="#111" stroke-width="1.4" fill="none"/>
<path d="M737.2,180.70000000000002 L740.6,184.5 L746.6,175.5" stroke="#111" stroke-width="1.4" fill="none"/>
<linearGradient id="lgq" x1="0" y1="0" x2="1" y2="1"><stop offset="0" stop-color="#ffffff"/><stop offset="1" stop-color="#b9d4f6"/></linearGradient>
<rect x="379.5" y="171" width="14" height="16.4" fill="url(#lgq)" stroke="#a9a7e0" stroke-width="1"/>
<text x="383.2" y="184.6" font-family="Liberation Sans, sans-serif" font-weight="bold" font-size="11.5" fill="#1c4fc0">?</text>
<circle cx="392" cy="173.6" r="4" fill="#fbe89a"/><circle cx="392" cy="173.6" r="3.2" fill="none" stroke="#f1cf4e" stroke-width="1.6" stroke-dasharray="1.4 1.1"/><circle cx="392" cy="173.6" r="1.7" fill="#fffbe0"/>
<rect x="1130.6" y="179" width="2.6" height="2.6" fill="#111"/>
<rect x="1135" y="179" width="2.6" height="2.6" fill="#111"/>
<rect x="1139.4" y="179" width="2.6" height="2.6" fill="#111"/>
<rect x="547.6" y="224.4" width="15" height="15" fill="#3fe0e6"/>
<circle cx="555.1" cy="231.9" r="5" fill="none" stroke="#174651" stroke-width="1.3" stroke-dasharray="2.4 0.8"/><circle cx="555.1" cy="231.9" r="3" fill="none" stroke="#174651" stroke-width="0.9"/><path d="M553.6,231.9 L554.8,233.1 L556.9,230.6" stroke="#174651" stroke-width="0.9" fill="none"/>
<path d="M1083.2,227.6 L1092.8,237.2 M1092.8,227.6 L1083.2,237.2" stroke="#fff" stroke-width="1.4" fill="none"/>
<linearGradient id="lgb" x1="0" y1="0" x2="1" y2="0"><stop offset="0" stop-color="#3d8df5"/><stop offset="1" stop-color="#cfe6ff"/></linearGradient>
<linearGradient id="lgg" x1="0" y1="0" x2="1" y2="0"><stop offset="0" stop-color="#18b018"/><stop offset="1" stop-color="#c8f5c0"/></linearGradient>
<path d="M563.5,266 V292 M566.5,269.5 V281.5 M563.5,269.5 H569 M566.5,275.5 H579 M566.5,281.5 H579 M563.5,287.5 H572" stroke="#4a46b8" stroke-width="1" stroke-dasharray="1 1" fill="none" shape-rendering="crispEdges"/>
<rect x="559.6" y="261.5" width="8" height="4" fill="url(#lgb)" stroke="#1c3fa6" stroke-width="1"/>
<rect x="569.7" y="267.5" width="8" height="4" fill="url(#lgb)" stroke="#1c3fa6" stroke-width="1"/>
<rect x="579.7" y="273.5" width="8" height="4" fill="url(#lgg)" stroke="#1c3fa6" stroke-width="1"/>
<rect x="579.7" y="279.5" width="8" height="4" fill="url(#lgb)" stroke="#1c3fa6" stroke-width="1"/>
<rect x="572.4" y="285.5" width="8" height="4" fill="url(#lgb)" stroke="#1c3fa6" stroke-width="1"/>
<circle cx="1092.3" cy="274.4" r="3.2" fill="none" stroke="#3c3c3c" stroke-width="1.2"/><path d="M1090,276.8 L1086.3,280.7" stroke="#3c3c3c" stroke-width="1.4"/>
<path d="M558.2,336.3 L562.0,340.1 L565.8,336.3" stroke="#4a4a4a" stroke-width="1.5" fill="none"/>
<path d="M574,353.4 L578.0,357.4 L582,353.4" stroke="#4a4a4a" stroke-width="1.5" fill="none"/>
<path d="M849.3,334.4 V340.2 L855,345.7 L858,343" fill="none" stroke="#7b7b7b" stroke-width="1.4" stroke-linejoin="round"/><path d="M849.3,334.4 H852" stroke="#7b7b7b" stroke-width="1.4"/>
<path d="M853.2,332.2 H859.008 L864.9920000000001,337.92 L859.1840000000001,343.55199999999996 L853.2,337.92 Z" fill="#fff" stroke="#0f9fe8" stroke-width="1.7" stroke-linejoin="round"/><circle cx="857.4000000000001" cy="336.09999999999997" r="1.15" fill="#0f9fe8"/>
<path d="M850.4,351.5 H857.0 L863.8,358.0 L857.1999999999999,364.4 L850.4,358.0 Z" fill="#fff" stroke="#0f9fe8" stroke-width="1.7" stroke-linejoin="round"/><circle cx="854.6" cy="355.4" r="1.15" fill="#0f9fe8"/>
<path d="M850.4,370.5 H857.0 L863.8,377.0 L857.1999999999999,383.4 L850.4,377.0 Z" fill="#fff" stroke="#0f9fe8" stroke-width="1.7" stroke-linejoin="round"/><circle cx="854.6" cy="374.4" r="1.15" fill="#0f9fe8"/>
<path d="M850.4,389.5 H857.0 L863.8,396.0 L857.1999999999999,402.4 L850.4,396.0 Z" fill="#fff" stroke="#0f9fe8" stroke-width="1.7" stroke-linejoin="round"/><circle cx="854.6" cy="393.4" r="1.15" fill="#0f9fe8"/>
<path d="M850.4,408.5 H857.0 L863.8,415.0 L857.1999999999999,421.4 L850.4,415.0 Z" fill="#fff" stroke="#0f9fe8" stroke-width="1.7" stroke-linejoin="round"/><circle cx="854.6" cy="412.4" r="1.15" fill="#0f9fe8"/>
<rect x="584.05" y="413.05" width="241.25" height="21.15" fill="none" stroke="#ff7f00" stroke-width="3.3"/>
<rect x="841.5" y="326.5" width="265" height="25" fill="none" stroke="#ff7f00" stroke-width="3"/>
<path d="M1118.6,180.8 L958,227" stroke="#ff7f00" stroke-width="4.2" stroke-linecap="round" fill="none"/>
<path d="M944.2,230.2 L960.4,217 L965.8,234.8 Z" fill="#ff7f00"/>
<path d="M13.6,50 H9.4 Q8.2,50 8.2,48.8 V38.4 Q8.2,37.2 9.4,37.2 H13.2 Q14.2,37.2 14.8,38.2 L15.8,40 H22.2 Q23.4,40 23.4,41.2 V43.4" fill="none" stroke="#7a7a7a" stroke-width="1.8" stroke-linejoin="round"/>
<circle cx="18.7" cy="46.6" r="3.4" fill="none" stroke="#0f9fe8" stroke-width="2.3"/><path d="M21.3,49.4 L24.2,52.2" stroke="#0f9fe8" stroke-width="2.6" stroke-linecap="round"/>
<text x="246.6" y="51.8" font-family="Liberation Sans, sans-serif" font-size="15" font-weight="bold" fill="#6b7585">?</text>
<rect x="265.1" y="40" width="11.8" height="11.8" fill="none" stroke="#6b7585" stroke-width="2"/>
<path d="M286.6,39.2 H293.8 V47.6 H296 V49.2 H291 V53.8 H289 V49.2 H284 V47.6 H286.6 Z" fill="#6b7585"/><rect x="289" y="42.6" width="1.4" height="2.4" fill="#d8dde6"/>
<path d="M303.8,41 L314.4,51.2 M314.4,41 L303.8,51.2" stroke="#6b7585" stroke-width="2.8" fill="none"/>
<path d="M578.5,348 V423 M594.5,364 V390 M594.5,373.5 H601 M594.5,390.5 H601 M578.5,407.5 H585 M578.5,423.5 H583 M566,338.5 H570 M582,355.5 H586" stroke="#c4c4c4" stroke-width="1" stroke-dasharray="1 1" fill="none" shape-rendering="crispEdges"/>
</svg>
<!--ICONS-END-->
</body>
</html>
